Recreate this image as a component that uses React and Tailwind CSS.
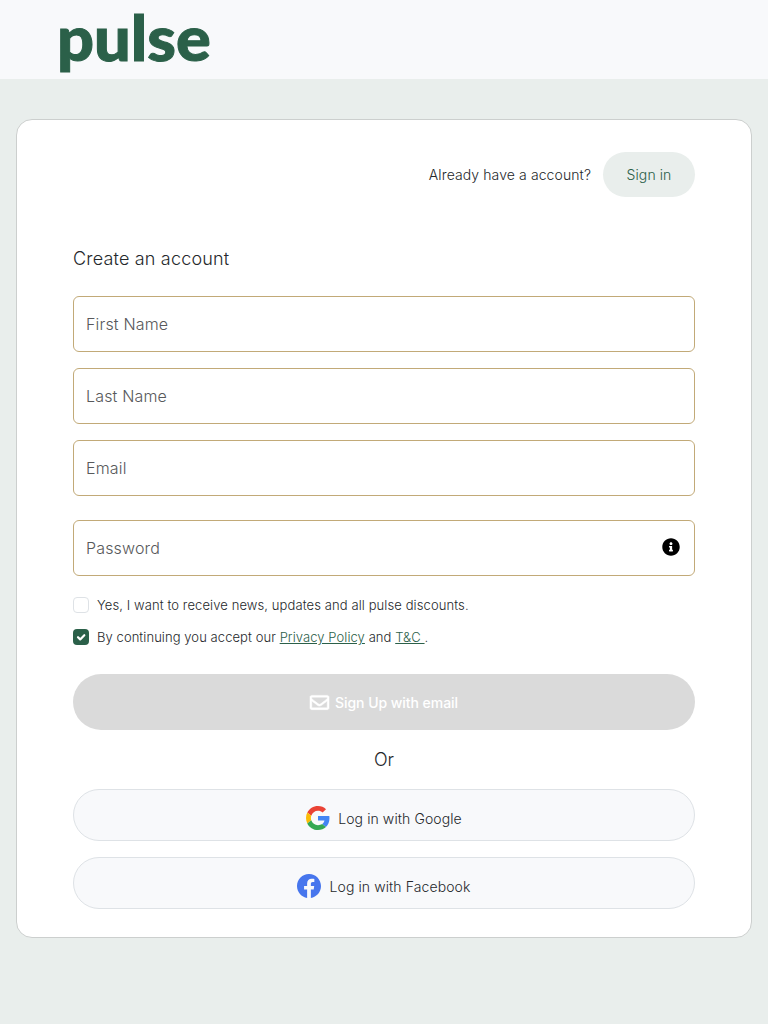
import { FaInfoCircle, FaRegEnvelope } from "react-icons/fa";
import { BsFacebook } from "react-icons/bs";

function GoogleIcon() {
  return (
    <svg viewBox="0 0 48 48" className="h-6 w-6">
      <path fill="#EA4335" d="M24 9.5c3.54 0 6.71 1.22 9.21 3.6l6.85-6.85C35.9 2.38 30.47 0 24 0 14.62 0 6.51 5.38 2.56 13.22l7.98 6.19C12.43 13.72 17.74 9.5 24 9.5z" />
      <path fill="#4285F4" d="M46.98 24.55c0-1.57-.15-3.09-.38-4.55H24v9.02h12.94c-.58 2.96-2.26 5.48-4.78 7.18l7.73 6c4.51-4.18 7.09-10.36 7.09-17.65z" />
      <path fill="#FBBC05" d="M10.53 28.59c-.48-1.45-.76-2.99-.76-4.59s.27-3.14.76-4.59l-7.98-6.19C.92 16.46 0 20.12 0 24c0 3.88.92 7.54 2.56 10.78l7.97-6.19z" />
      <path fill="#34A853" d="M24 48c6.48 0 11.93-2.13 15.89-5.81l-7.73-6c-2.15 1.45-4.92 2.3-8.16 2.3-6.26 0-11.57-4.22-13.47-9.91l-7.98 6.19C6.51 42.62 14.62 48 24 48z" />
    </svg>
  );
}

function Field({ label, type = "text", className = "", children }) {
  return (
    <div className={`flex h-14 items-center rounded-md border border-[#c2aa78] bg-white pr-3.5 pl-3 ${className}`}>
      <input
        type={type}
        placeholder={label}
        className="min-w-0 flex-1 bg-transparent text-base font-light tracking-[0.16px] outline-none placeholder:text-[#58595b]"
      />
      {children}
    </div>
  );
}

function SocialButton({ icon, label, className = "" }) {
  return (
    <button className={`flex h-[52px] w-full items-center justify-center gap-2 rounded-full border border-[#dee2e6] bg-[#f8f9fb] pt-1.5 text-sm tracking-[0.1px] text-[#25282b] ${className}`}>
      {icon}
      <span className="pt-0.5 font-light">{label}</span>
    </button>
  );
}

export default function App() {
  return (
    <div className="min-h-screen bg-[#e9eeec] font-['Inter',sans-serif] font-light text-[#25282b]">
      <header className="flex h-[79px] items-start bg-[#f8f9fb] pl-[57px]">
        <span className="origin-left scale-x-[1.03] font-['Lato',sans-serif] text-[63px] leading-[73px] font-black text-[#2b6049] [-webkit-text-stroke:1px_#2b6049]">pulse</span>
      </header>

      <main className="px-4 pt-10">
        <section className="h-[819px] rounded-2xl border border-[#cccfce] bg-white px-14 pt-8">
          <div className="flex items-center justify-end gap-3">
            <span className="text-sm tracking-[0.1px]">Already have a account?</span>
            <button className="h-[45px] w-[92px] rounded-full bg-[#e9eeec] text-sm tracking-[0.1px] text-[#2b6049]">Sign in</button>
          </div>

          <h1 className="mt-12 text-lg leading-[27px] tracking-[0.18px]">Create an account</h1>

          <form className="mt-6">
            <Field label="First Name" />
            <Field label="Last Name" className="mt-4" />
            <Field label="Email" className="mt-4" />
            <Field label="Password" type="password" className="mt-6">
              <FaInfoCircle className="mb-0.5 h-[18px] w-[18px] text-black" />
            </Field>

            <div className="mt-[19px] flex h-5 items-center gap-2 text-[13px] tracking-[0.1px]">
              <span className="h-4 w-4 rounded border border-[#dee2e6]" />
              <span className="pt-0.5">Yes, I want to receive news, updates and all pulse discounts.</span>
            </div>
            <div className="mt-3 flex h-5 items-center gap-2 text-[13px] tracking-[0.07px]">
              <span className="flex h-4 w-4 items-center justify-center rounded bg-[#2b6049]">
                <svg viewBox="0 0 16 16" className="h-4 w-4" fill="none" stroke="white" strokeWidth="2.2" strokeLinecap="round" strokeLinejoin="round">
                  <path d="M5 8.2l2.2 2.2L11.3 6.2" />
                </svg>
              </span>
              <span className="pt-0.5">
                By continuing you accept our <a className="text-[#2b6049] underline">Privacy Policy</a> and{" "}
                <a className="text-[#2b6049] underline">T&amp;C </a>.
              </span>
            </div>

            <button type="button" className="mt-[27px] flex h-14 w-full items-center justify-center gap-1.5 rounded-full bg-[#dadada] pt-0.5 text-sm font-medium tracking-[-0.05px] text-white">
              <FaRegEnvelope className="mb-0.5 h-[19px] w-[19px] overflow-visible" stroke="white" strokeWidth="14" />
              <span>Sign Up with email</span>
            </button>
            <p className="mt-4 text-center text-lg leading-[27px]">Or</p>
            <SocialButton className="mt-4" label="Log in with Google" icon={<GoogleIcon />} />
            <SocialButton className="mt-4" label="Log in with Facebook" icon={<BsFacebook className="h-6 w-6 text-[#4776ed]" />} />
          </form>
        </section>
      </main>
    </div>
  );
}
